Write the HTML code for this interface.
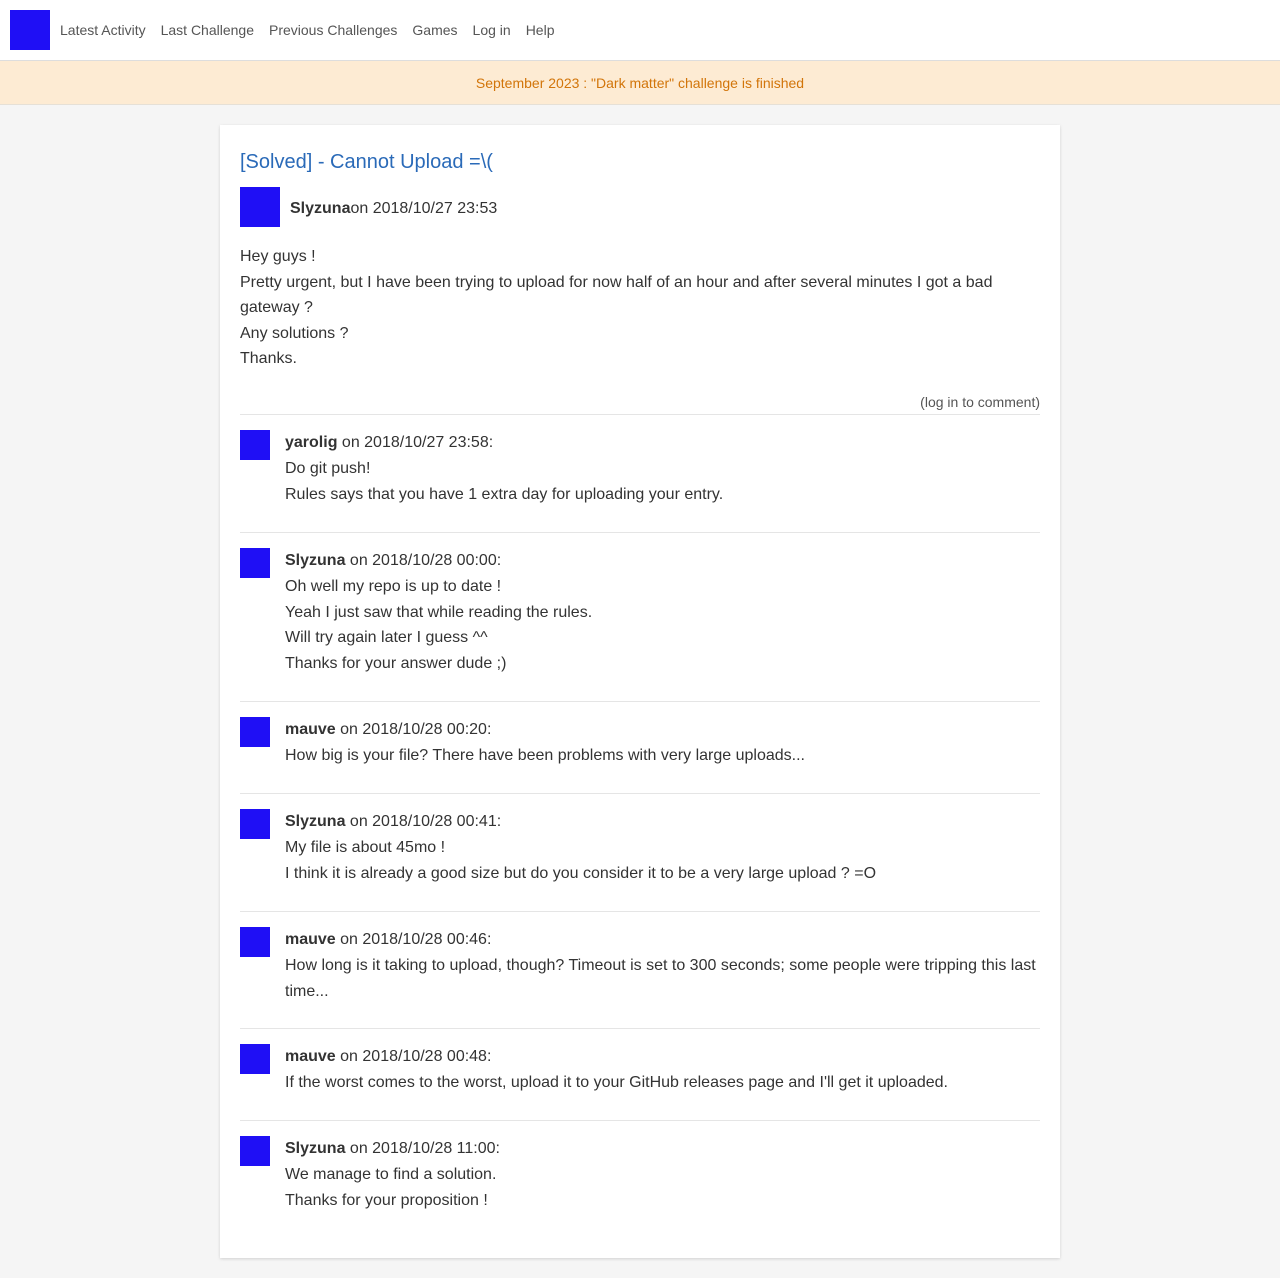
<!DOCTYPE html>
<html><head><meta charset="utf-8"><style>
*{box-sizing:border-box;margin:0;padding:0}
body{width:1280px;height:1278px;background:#f5f5f5;font-family:"Liberation Sans",Arial,sans-serif;color:#333;overflow:hidden}
.nav{height:61px;background:#fff;border-bottom:1px solid #ddd;display:flex;align-items:center;padding-left:10px}
.logo{width:40px;height:40px;background:#1f0ff5;margin-right:10px}
.nav a{color:#555;font-size:14px;margin-right:15px;text-decoration:none}
.banner{height:44px;background:#fdebd3;border-bottom:1px solid #e6e0d6;color:#d2750a;font-size:14px;text-align:center;line-height:45px}
.card{position:absolute;left:220px;top:125px;width:840px;height:1133px;background:#fff;box-shadow:0 1px 3px rgba(0,0,0,.15);padding:20px}
h1{font-size:20px;font-weight:normal;color:#2a6ab8;margin-top:5px;height:27px;line-height:24px}
.author{display:flex;align-items:center;height:40px;margin-top:10px;font-size:16px}
.author .av{width:40px;height:40px;background:#1f0ff5;margin-right:10px}
.author span{padding-top:3px}
.body{margin-top:17px;font-size:16px;line-height:25.6px}
.login{text-align:right;font-size:14px;color:#555;margin-top:22px;height:21px;border-bottom:1px solid #e5e5e5;padding-bottom:0}
.c{display:flex;border-bottom:1px solid #e5e5e5;padding:15px 0 24px}
.c:last-child{border-bottom:none}
.c .av{width:30px;height:30px;background:#1f0ff5;margin-right:15px;flex:none}
.c .t{font-size:16px;line-height:25.9px}
</style></head><body>
<div class="nav"><div class="logo"></div><a>Latest Activity</a><a>Last Challenge</a><a>Previous Challenges</a><a>Games</a><a>Log in</a><a>Help</a></div>
<div class="banner">September 2023 : "Dark matter" challenge is finished</div>
<div class="card">
<h1>[Solved] - Cannot Upload =\(</h1>
<div class="author"><div class="av"></div><span><b>Slyzuna</b>on 2018/10/27 23:53</span></div>
<div class="body">Hey guys !<br>Pretty urgent, but I have been trying to upload for now half of an hour and after several minutes I got a bad gateway ?<br>Any solutions ?<br>Thanks.</div>
<div class="login">(log in to comment)</div>
<div class="c"><div class="av"></div><div class="t"><b>yarolig</b> on 2018/10/27 23:58:<br>Do git push!<br>Rules says that you have 1 extra day for uploading your entry.</div></div>
<div class="c"><div class="av"></div><div class="t"><b>Slyzuna</b> on 2018/10/28 00:00:<br>Oh well my repo is up to date !<br>Yeah I just saw that while reading the rules.<br>Will try again later I guess ^^<br>Thanks for your answer dude ;)</div></div>
<div class="c"><div class="av"></div><div class="t"><b>mauve</b> on 2018/10/28 00:20:<br>How big is your file? There have been problems with very large uploads...</div></div>
<div class="c"><div class="av"></div><div class="t"><b>Slyzuna</b> on 2018/10/28 00:41:<br>My file is about 45mo !<br>I think it is already a good size but do you consider it to be a very large upload ? =O</div></div>
<div class="c"><div class="av"></div><div class="t"><b>mauve</b> on 2018/10/28 00:46:<br>How long is it taking to upload, though? Timeout is set to 300 seconds; some people were tripping this last time...</div></div>
<div class="c"><div class="av"></div><div class="t"><b>mauve</b> on 2018/10/28 00:48:<br>If the worst comes to the worst, upload it to your GitHub releases page and I'll get it uploaded.</div></div>
<div class="c"><div class="av"></div><div class="t"><b>Slyzuna</b> on 2018/10/28 11:00:<br>We manage to find a solution.<br>Thanks for your proposition !</div></div>
</div>
</body></html>
